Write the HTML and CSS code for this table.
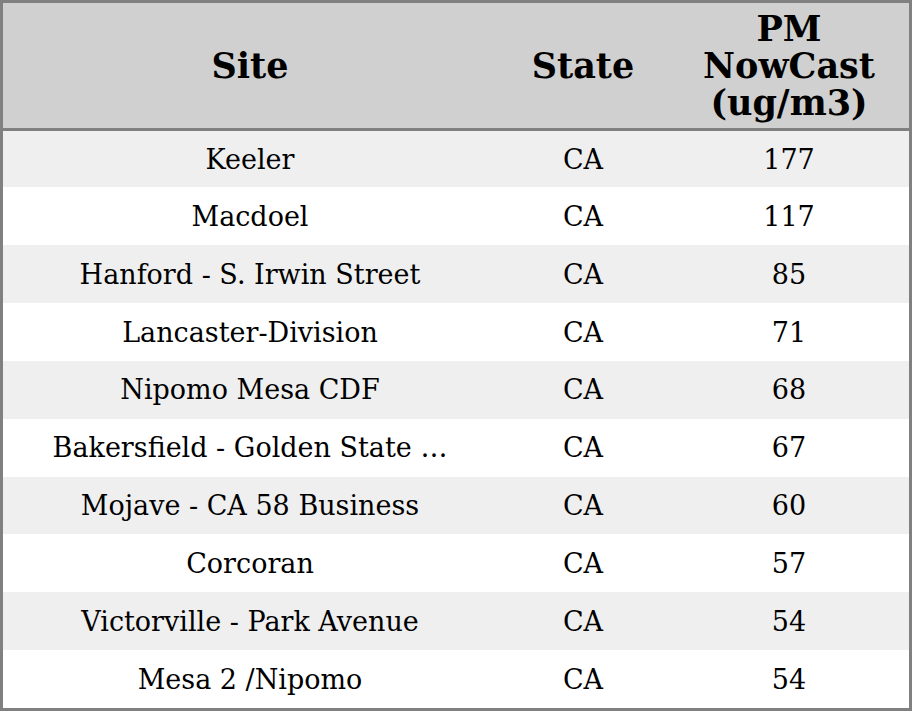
FILE: index.html
```html
<!DOCTYPE html>
<html>
<head>
<meta charset="utf-8">
<link rel="stylesheet" href="styles.css">
</head>
<body>
<div class="table">
  <div class="row head">
    <div class="cell">Site</div>
    <div class="cell">State</div>
    <div class="cell">PM<br>NowCast<br>(ug/m3)</div>
  </div>
  <div class="row odd"><div class="cell">Keeler</div><div class="cell">CA</div><div class="cell">177</div></div>
  <div class="row"><div class="cell">Macdoel</div><div class="cell">CA</div><div class="cell">117</div></div>
  <div class="row odd"><div class="cell">Hanford - S. Irwin Street</div><div class="cell">CA</div><div class="cell">85</div></div>
  <div class="row"><div class="cell">Lancaster-Division</div><div class="cell">CA</div><div class="cell">71</div></div>
  <div class="row odd"><div class="cell">Nipomo Mesa CDF</div><div class="cell">CA</div><div class="cell">68</div></div>
  <div class="row"><div class="cell">Bakersfield - Golden State …</div><div class="cell">CA</div><div class="cell">67</div></div>
  <div class="row odd"><div class="cell">Mojave - CA 58 Business</div><div class="cell">CA</div><div class="cell">60</div></div>
  <div class="row"><div class="cell">Corcoran</div><div class="cell">CA</div><div class="cell">57</div></div>
  <div class="row odd"><div class="cell">Victorville - Park Avenue</div><div class="cell">CA</div><div class="cell">54</div></div>
  <div class="row"><div class="cell">Mesa 2 /Nipomo</div><div class="cell">CA</div><div class="cell">54</div></div>
</div>
</body>
</html>
```
FILE: styles.css
```css
html, body {
  margin: 0;
  padding: 0;
  background: #ffffff;
}
.table {
  width: 912px;
  height: 711px;
  box-sizing: border-box;
  border: 3px solid #808080;
  display: flex;
  flex-direction: column;
  font-family: "DejaVu Serif", serif;
  color: #000;
  overflow: hidden;
}
.row {
  display: grid;
  grid-template-columns: 494px 172px 1fr;
  height: 58px;
  background: #ffffff;
  font-size: 27px;
}
.row.odd {
  background: #efefef;
}
.row.head {
  height: 125px;
  background: #d0d0d0;
  border-bottom: 3px solid #808080;
  font-size: 35px;
  font-weight: bold;
  line-height: 37px;
}
.row:nth-child(2) {
  height: 57px;
}
.cell {
  display: flex;
  align-items: center;
  justify-content: center;
  text-align: center;
  white-space: nowrap;
}
```
